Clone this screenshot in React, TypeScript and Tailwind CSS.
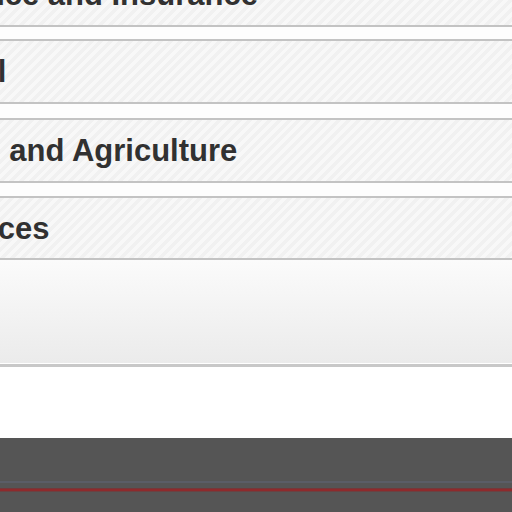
import React from "react";

const stripe =
  "bg-[image:repeating-linear-gradient(135deg,#f1f1f1_0px,#f1f1f1_3.5px,#f8f8f8_3.5px,#f8f8f8_7px)]";

function Row({ text, h, shift }: { text: string; h: string; shift: string }) {
  return (
    <div className={`flex items-center overflow-hidden whitespace-nowrap ${h} ${stripe}`}>
      <span className={`${shift} text-[31px] font-bold leading-none text-[#313131]`}>{text}</span>
    </div>
  );
}

export default function App() {
  return (
    <div
      className="h-[512px] w-[512px] overflow-hidden bg-white"
      style={{ fontFamily: '"Liberation Sans", Arial, sans-serif' }}
    >
      <div className="-mt-[36px] flex flex-col">
        <Row text="Finance and Insurance" h="h-[61px]" shift="-ml-[78px]" />
        <div className="h-[2px] bg-[#c3c3c3]" />
        <div className="h-[12px] bg-[#fdfdfd]" />
        <div className="h-[2px] bg-[#c3c3c3]" />
        <Row text="Retail" h="h-[61px]" shift="-ml-[78px]" />
        <div className="h-[2px] bg-[#c3c3c3]" />
        <div className="h-[14px] bg-[#fdfdfd]" />
        <div className="h-[2px] bg-[#c3c3c3]" />
        <Row text="Food and Agriculture" h="h-[61px]" shift="-ml-[75px]" />
        <div className="h-[2px] bg-[#c3c3c3]" />
        <div className="h-[13px] bg-[#fdfdfd]" />
        <div className="h-[2px] bg-[#c3c3c3]" />
        <Row text="Services" h="h-[60px]" shift="-ml-[78px]" />
        <div className="h-[2px] bg-[#c3c3c3]" />
        <div className="h-[103px] bg-gradient-to-b from-[#fbfbfb] to-[#ebebeb]" />
        <div className="h-[1px] bg-white" />
        <div className="h-[3px] bg-[#c8c8c8]" />
        <div className="h-[71px] bg-white" />
        <div className="flex h-[80px] flex-col bg-[#555555]">
          <div className="h-[43px]" />
          <div className="h-[2px] bg-[#5a5d66]" />
          <div className="h-[5px]" />
          <div className="h-[1px] bg-[#74383a]" />
          <div className="h-[2px] bg-[#8e2a2c]" />
          <div className="h-[1px] bg-[#6a4243]" />
        </div>
      </div>
    </div>
  );
}
